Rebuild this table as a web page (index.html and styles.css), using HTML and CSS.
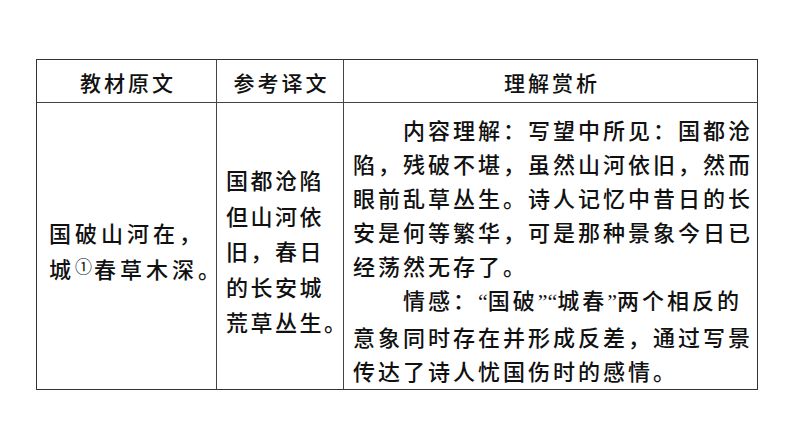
FILE: index.html
```html
<!DOCTYPE html>
<html lang="zh-CN">
<head>
<meta charset="utf-8">
<link rel="stylesheet" href="styles.css">
</head>
<body>
<div class="table">
  <div class="cell head c1">教材原文</div>
  <div class="cell head c2">参考译文</div>
  <div class="cell head c3">理解赏析</div>

  <div class="cell body c1">
    <div class="lines left">
      <div>国破山河在，</div>
      <div>城<span class="note">①</span>春草木深。</div>
    </div>
  </div>
  <div class="cell body c2">
    <div class="lines mid">
      <div>国都沧陷</div>
      <div>但山河依</div>
      <div>旧，春日</div>
      <div>的长安城</div>
      <div>荒草丛生。</div>
    </div>
  </div>
  <div class="cell body c3">
    <div class="lines right">
      <div class="indent">内容理解：写望中所见：国都沧</div>
      <div>陷，残破不堪，虽然山河依旧，然而</div>
      <div>眼前乱草丛生。诗人记忆中昔日的长</div>
      <div>安是何等繁华，可是那种景象今日已</div>
      <div>经荡然无存了。</div>
      <div class="indent">情感：<span class="q">“</span>国破<span class="q">”“</span>城春<span class="q">”</span>两个相反的</div>
      <div>意象同时存在并形成反差，通过写景</div>
      <div>传达了诗人忧国伤时的感情。</div>
    </div>
  </div>
</div>
</body>
</html>
```

FILE: styles.css
```css
html, body {
  margin: 0;
  padding: 0;
  background: #ffffff;
}

body {
  width: 794px;
  height: 447px;
  overflow: hidden;
  font-family: "Noto Sans CJK SC", "Noto Sans", sans-serif;
  font-weight: 500;
  color: #111111;
}

.table {
  margin: 59px 0 0 36px;
  width: 722px;
  box-sizing: border-box;
  border: 1px solid #333333;
  display: grid;
  grid-template-columns: 180px 127px 413px;
  grid-template-rows: 43px 286px;
}

.cell {
  box-sizing: border-box;
  display: flex;
}

.c1, .c2 {
  border-right: 1px solid #444444;
}

.head {
  border-bottom: 1px solid #444444;
  justify-content: center;
  align-items: center;
  font-size: 21px;
  letter-spacing: 3px;
  padding-top: 2px;
  padding-left: 3px;
}

.body {
  align-items: center;
  font-size: 22px;
  white-space: nowrap;
}

.c1.body {
  padding: 8px 0 0 12px;
}

.c2.body {
  padding: 10px 0 0 9px;
}

.c3.body {
  padding: 6px 0 0 9px;
}

.left {
  line-height: 34px;
  letter-spacing: 4px;
}

.mid {
  line-height: 35.5px;
  letter-spacing: 2.5px;
}

.right {
  line-height: 34px;
  letter-spacing: 3px;
}

.indent {
  padding-left: 50px;
}

.note {
  font-size: 17px;
  vertical-align: 5px;
  letter-spacing: 0;
  margin-right: 2px;
  font-family: "Noto Sans CJK SC", sans-serif;
  font-weight: 400;
}

.q {
  font-family: "Liberation Serif", serif;
  letter-spacing: 0;
}
```
